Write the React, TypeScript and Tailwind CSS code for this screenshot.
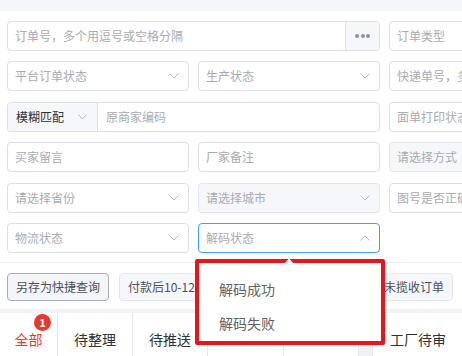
import React from 'react'

const font = { fontFamily: '"Noto Sans CJK SC", "Noto Sans", sans-serif' }

function Chevron({ up = false, small = false }: { up?: boolean; small?: boolean }) {
  const w = small ? 9 : 10
  return (
    <svg width={w} height={6} viewBox={`0 0 ${w} 6`} fill="none" className="shrink-0">
      <path
        d={up ? `M0.5 5.5 L${w / 2} 1 L${w - 0.5} 5.5` : `M0.5 0.5 L${w / 2} 5 L${w - 0.5} 0.5`}
        stroke="#b4b8c0"
        strokeWidth="1"
      />
    </svg>
  )
}

function Input({ ph, disabled = false }: { ph: string; disabled?: boolean }) {
  return (
    <div
      className={`h-[30px] rounded-[4px] border flex items-center px-[7px] text-[12px] whitespace-nowrap overflow-hidden ${
        disabled ? 'bg-[#f5f7fa] border-[#e4e7ed] text-[#a8abb2]' : 'bg-white border-[#dcdfe6] text-[#a8abb2]'
      }`}
    >
      {ph}
    </div>
  )
}

function Select({ ph, disabled = false, focus = false }: { ph: string; disabled?: boolean; focus?: boolean }) {
  return (
    <div
      className={`h-[30px] rounded-[4px] border flex items-center justify-between pl-[7px] pr-[9px] text-[12px] whitespace-nowrap ${
        focus
          ? 'bg-white border-[#409eff] text-[#a8abb2]'
          : disabled
          ? 'bg-[#f5f7fa] border-[#e4e7ed] text-[#a8abb2]'
          : 'bg-white border-[#dcdfe6] text-[#a8abb2]'
      }`}
    >
      <span>{ph}</span>
      <Chevron up={focus} />
    </div>
  )
}

// tabs behind the open dropdown are left without labels
const tabs = [
  { label: '全部', w: 'w-[58px]', active: true },
  { label: '待整理', w: 'w-[75px]' },
  { label: '待推送', w: 'w-[75px]' },
  { label: '', w: 'w-[76px]' },
  { label: '', w: 'w-[75px]' },
]

export default function App() {
  return (
    <div className="w-[462px] h-[356px] overflow-hidden relative bg-white" style={font}>
      <div className="h-[11px] bg-[#f5f6fa]" />

      <div className="pt-[10px] px-[7px]">
        <div className="grid grid-cols-[182px_182px_182px] gap-x-[9px] gap-y-[10.4px]">
          <div className="col-span-2 h-[30px] rounded-[4px] border border-[#dcdfe6] flex overflow-hidden">
            <div className="flex-1 flex items-center px-[7px] text-[12px] text-[#a8abb2]">订单号，多个用逗号或空格分隔</div>
            <div className="w-[34px] bg-[#f5f7fa] border-l border-[#dcdfe6] flex items-center justify-center gap-[1.5px]">
              <span className="w-[4px] h-[4px] rounded-full bg-[#8d929b]" />
              <span className="w-[4px] h-[4px] rounded-full bg-[#8d929b]" />
              <span className="w-[4px] h-[4px] rounded-full bg-[#8d929b]" />
            </div>
          </div>
          <Input ph="订单类型" />

          <Select ph="平台订单状态" />
          <Select ph="生产状态" />
          <Input ph="快递单号，多个用逗号或空格分隔" />

          <div className="col-span-2 h-[30px] rounded-[4px] border border-[#dcdfe6] flex overflow-hidden">
            <div className="w-[90px] bg-[#f5f7fa] border-r border-[#dcdfe6] flex items-center justify-between pl-[8px] pr-[10px] text-[12px] text-[#303133]">
              <span>模糊匹配</span>
              <Chevron small />
            </div>
            <div className="flex-1 flex items-center px-[8px] text-[12px] text-[#a8abb2]">原商家编码</div>
          </div>
          <Input ph="面单打印状态" />

          <Input ph="买家留言" />
          <Input ph="厂家备注" />
          <Input ph="请选择方式" disabled />

          <Select ph="请选择省份" />
          <Select ph="请选择城市" disabled />
          <Input ph="图号是否正确" />

          <Select ph="物流状态" />
          <Select ph="解码状态" focus />
        </div>
      </div>

      <div className="mt-[9px] border-t border-[#ebeef5]" />

      <div className="mt-[10px] px-[7px] flex gap-[10px] whitespace-nowrap">
        <button className="h-[28px] px-[8px] rounded-[4px] border border-[#a9aebb] bg-[#f4f5f8] text-[12px] text-[#4a4f5a]">另存为快捷查询</button>
        <button className="h-[28px] w-[222px] text-left px-[8px] rounded-[4px] border border-[#e4e7ed] bg-[#f5f7fa] text-[12px] text-[#4a4f5a]">付款后10-12小时未发货</button>
        <button className="h-[28px] px-[8px] rounded-[4px] border border-[#e4e7ed] bg-[#f5f7fa] text-[12px] text-[#4a4f5a]">超时未揽收订单</button>
      </div>

      <div className="mt-[8px] h-[4px] bg-[#f0f2f5]" />

      <div className="flex h-[54px] whitespace-nowrap">
        {tabs.map((t, i) => (
          <div key={i} className={`${t.w} relative shrink-0 border-r border-[#e4e7ed] flex items-center justify-center text-[14px] ${t.active ? 'text-[#e8392f]' : 'text-[#303133]'}`}>
            {t.label}
            {t.active && (
              <span className="absolute left-[34px] top-[1px] w-[17px] h-[17px] rounded-full bg-[#e8392f] text-white text-[11px] font-bold flex items-center justify-center leading-none">1</span>
            )}
          </div>
        ))}
        <div className="w-[14px] shrink-0 bg-[#f0f2f5] border-r border-[#e4e7ed]" />
        <div className="w-[90px] shrink-0 flex items-center pl-[17px] text-[14px] text-[#303133]">工厂待审</div>
      </div>

      <div className="absolute left-[195px] top-[259px] w-[190px] h-[86px] border-4 border-[#e8151c] bg-white rounded-[2px]">
        <div className="pt-[9px]">
          <div className="h-[34px] flex items-center pl-[20px] text-[14px] text-[#606266]">解码成功</div>
          <div className="h-[34px] flex items-center pl-[20px] text-[14px] text-[#606266]">解码失败</div>
        </div>
      </div>
      <svg className="absolute left-[283px] top-[258px]" width="12" height="7" viewBox="0 0 12 7">
        <polygon points="0,7 6,1 12,7" fill="#ffffff" stroke="#e4e7ed" strokeWidth="0.8" />
      </svg>
    </div>
  )
}
